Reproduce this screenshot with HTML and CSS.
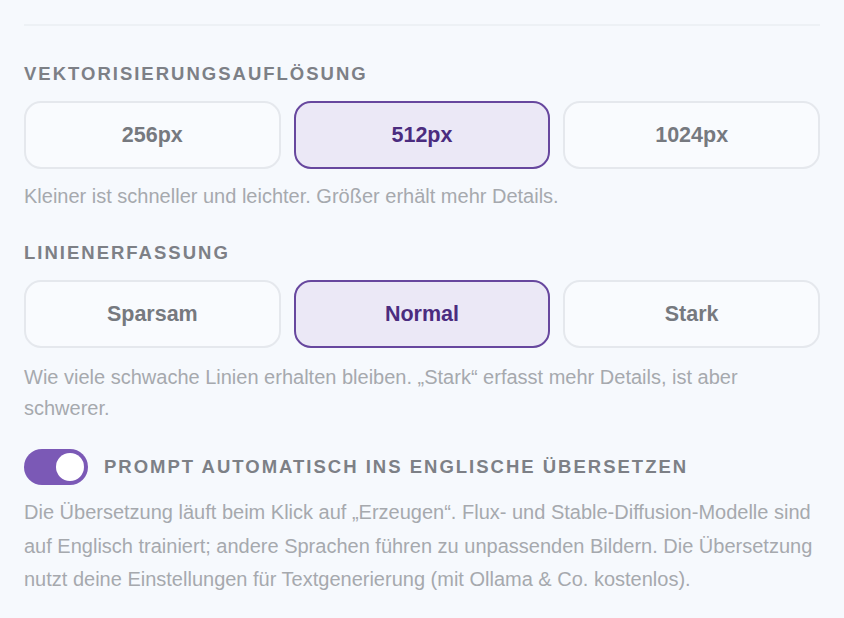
FILE: index.html
```html
<!DOCTYPE html>
<html lang="de">
<head>
<meta charset="utf-8">
<link rel="stylesheet" href="styles.css">
</head>
<body>
<div class="panel">
  <hr class="divider">
  <section class="group">
    <div class="label">Vektorisierungsauflösung</div>
    <div class="seg">
      <button class="opt">256px</button>
      <button class="opt active">512px</button>
      <button class="opt">1024px</button>
    </div>
    <p class="hint">Kleiner ist schneller und leichter. Größer erhält mehr Details.</p>
  </section>
  <section class="group second">
    <div class="label">Linienerfassung</div>
    <div class="seg">
      <button class="opt">Sparsam</button>
      <button class="opt active">Normal</button>
      <button class="opt">Stark</button>
    </div>
    <p class="hint">Wie viele schwache Linien erhalten bleiben. „Stark“ erfasst mehr Details, ist aber schwerer.</p>
  </section>
  <section class="toggle-group">
    <div class="toggle-row">
      <span class="toggle on"><span class="knob"></span></span>
      <span class="label">Prompt automatisch ins Englische übersetzen</span>
    </div>
    <p class="hint para">Die Übersetzung läuft beim Klick auf „Erzeugen“. Flux- und Stable-Diffusion-Modelle sind auf Englisch trainiert; andere Sprachen führen zu unpassenden Bildern. Die Übersetzung nutzt deine Einstellungen für Textgenerierung (mit Ollama &amp; Co. kostenlos).</p>
  </section>
</div>
</body>
</html>
```

FILE: styles.css
```css
html, body {
  margin: 0;
  padding: 0;
  background: #f6f9fd;
}
body {
  font-family: "Liberation Sans", Arial, sans-serif;
  width: 844px;
  height: 618px;
  overflow: hidden;
}
.panel {
  padding: 0 24px 0 24px;
}
.divider {
  margin: 24px 0 0 0;
  border: 0;
  height: 2px;
  background: #edf1f5;
}
.group {
  display: flex;
  flex-direction: column;
  padding-top: 37px;
}
.group.second {
  padding-top: 30px;
}
.label {
  font-size: 18.5px;
  font-weight: 700;
  letter-spacing: 2px;
  text-transform: uppercase;
  color: #7d8086;
  line-height: 22px;
}
.seg {
  display: grid;
  grid-template-columns: 1fr 1fr 1fr;
  gap: 13px;
  margin-top: 16px;
}
.opt {
  height: 68px;
  border: 2px solid #e5e8ed;
  border-radius: 17px;
  background: #f9fbfe;
  font-family: "Liberation Sans", Arial, sans-serif;
  font-size: 21.5px;
  font-weight: 700;
  color: #76797f;
  padding: 0;
}
.opt.active {
  background: #ebe8f6;
  border-color: #67479e;
  color: #4b2c7f;
}
.hint {
  margin: 12px 0 0 0;
  font-size: 20px;
  line-height: 31px;
  color: #a6a9ae;
}
.group.second .hint {
  margin-top: 14px;
}
.toggle-row {
  display: flex;
  align-items: center;
  gap: 16px;
  margin-top: 25px;
}
.toggle {
  width: 64px;
  height: 36px;
  border-radius: 18px;
  background: #7b59b6;
  display: flex;
  align-items: center;
  justify-content: flex-end;
  padding: 0 4px;
  box-sizing: border-box;
  flex: none;
}
.knob {
  width: 28px;
  height: 28px;
  border-radius: 50%;
  background: #ffffff;
}
.hint.para {
  margin-top: 11px;
  font-size: 20px;
  line-height: 33.5px;
}
```
